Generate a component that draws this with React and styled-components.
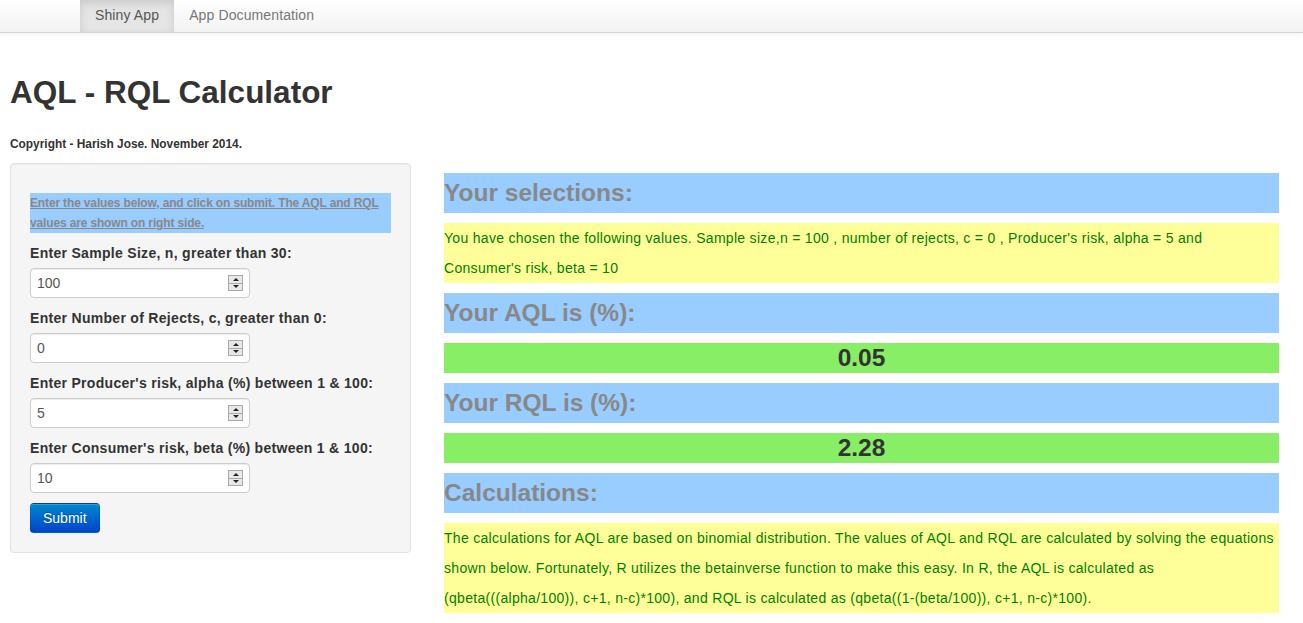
import React from "react";
import styled, { createGlobalStyle } from "styled-components";

const Global = createGlobalStyle`
  html, body { margin: 0; padding: 0; background: #fff; }
  body { font-family: "Liberation Sans", Arial, Helvetica, sans-serif; font-size: 14px; line-height: 20px; color: #333; }
  * { box-sizing: border-box; }
`;

const Navbar = styled.nav`
  height: 33px;
  background: linear-gradient(to bottom, #ffffff, #f2f2f2);
  border-bottom: 1px solid #d4d4d4;
  box-shadow: 0 1px 4px rgba(0,0,0,0.065);
  display: flex;
  padding-left: 80px;
`;

const NavTab = styled.a`
  display: flex;
  align-items: center;
  height: 32px;
  padding: 0 15px 2px;
  font-size: 14px;
  letter-spacing: 0.12px;
  color: ${p => (p.$active ? "#555" : "#777")};
  background: ${p => (p.$active ? "#e5e5e5" : "transparent")};
  box-shadow: ${p => (p.$active ? "inset 0 3px 8px rgba(0,0,0,0.125)" : "none")};
  text-decoration: none;
`;

const Page = styled.div`
  padding: 0 24px 0 10px;
`;

const Title = styled.h2`
  margin: 39px 0 0;
  font-size: 31.5px;
  line-height: 40px;
  font-weight: bold;
  color: #333;
`;

const Copyright = styled.h6`
  margin: 22px 0 0;
  font-size: 11.9px;
  line-height: 20px;
  font-weight: bold;
  color: #333;
`;

const Row = styled.div`
  display: grid;
  grid-template-columns: 401px 835px;
  column-gap: 33px;
  margin-top: 9px;
  align-items: start;
`;

const Well = styled.div`
  background: #f5f5f5;
  border: 1px solid #e3e3e3;
  border-radius: 4px;
  box-shadow: inset 0 1px 1px rgba(0,0,0,0.05);
  padding: 29px 19px 19px;
`;

const Note = styled.div`
  background: #99ccff;
  color: #888;
  font-size: 12px;
  font-weight: bold;
  line-height: 20px;
  letter-spacing: -0.15px;
  text-decoration: underline;
  margin-bottom: 10px;
`;

const Field = styled.div`
  margin-bottom: 5px;
`;

const Label = styled.label`
  display: block;
  font-size: 14px;
  font-weight: bold;
  line-height: 20px;
  letter-spacing: 0.3px;
  margin: 0 0 5px;
  color: #333;
`;

const InputBox = styled.div`
  width: 220px;
  height: 30px;
  background: #fff;
  border: 1px solid #ccc;
  border-radius: 4px;
  box-shadow: inset 0 1px 1px rgba(0,0,0,0.075);
  display: flex;
  align-items: center;
  justify-content: space-between;
  padding: 0 6px;
  margin-bottom: 10px;
`;

const Value = styled.span`
  font-size: 14px;
  color: #555;
`;

const Spinner = styled.div`
  width: 15px;
  height: 16px;
  display: flex;
  flex-direction: column;
  border: 1px solid #a9a9a9;
  background: #e8e8e8;
`;

const SpinHalf = styled.div`
  flex: 1;
  display: flex;
  align-items: center;
  justify-content: center;
  ${p => (p.$down ? "border-top: 1px solid #a9a9a9;" : "")}
  &::after {
    content: "";
    width: 0;
    height: 0;
    border-left: 3px solid transparent;
    border-right: 3px solid transparent;
    ${p => (p.$down ? "border-top: 3px solid #222;" : "border-bottom: 3px solid #222;")}
  }
`;

const SubmitButton = styled.button`
  font-family: inherit;
  font-size: 14px;
  line-height: 20px;
  color: #fff;
  padding: 4px 12px;
  height: 30px;
  border: 1px solid #0044cc;
  border-color: rgba(0,0,0,0.1) rgba(0,0,0,0.1) rgba(0,0,0,0.25);
  border-radius: 4px;
  background: linear-gradient(to bottom, #0088cc, #0044cc);
  text-shadow: 0 -1px 0 rgba(0,0,0,0.25);
  box-shadow: inset 0 1px 0 rgba(255,255,255,0.2), 0 1px 2px rgba(0,0,0,0.05);
  cursor: pointer;
`;

const Main = styled.div`
  display: flex;
  flex-direction: column;
  gap: 10px;
  padding-top: 10px;
`;

const Heading = styled.h3`
  margin: 0;
  background: #99ccff;
  color: #888;
  font-size: 24.5px;
  font-weight: bold;
  line-height: 40px;
  height: 40px;
`;

const Info = styled.div`
  background: #ffff99;
  color: #008000;
  font-size: 14px;
  line-height: 30px;
  letter-spacing: 0.3px;
`;

const Result = styled.div`
  background: #88ee66;
  color: #333;
  font-size: 24.5px;
  font-weight: bold;
  line-height: 30px;
  height: 30px;
  text-align: center;
`;

const fields = [
  { label: "Enter Sample Size, n, greater than 30:", value: "100" },
  { label: "Enter Number of Rejects, c, greater than 0:", value: "0" },
  { label: "Enter Producer's risk, alpha (%) between 1 & 100:", value: "5" },
  { label: "Enter Consumer's risk, beta (%) between 1 & 100:", value: "10" },
];

export default function App() {
  return (
    <>
      <Global />
      <Navbar>
        <NavTab $active href="#">Shiny App</NavTab>
        <NavTab href="#">App Documentation</NavTab>
      </Navbar>
      <Page>
        <Title>AQL - RQL Calculator</Title>
        <Copyright>Copyright - Harish Jose. November 2014.</Copyright>
        <Row>
          <Well>
            <Note>
              Enter the values below, and click on submit. The AQL and RQL values are shown on right side.
            </Note>
            {fields.map(f => (
              <Field key={f.label}>
                <Label>{f.label}</Label>
                <InputBox>
                  <Value>{f.value}</Value>
                  <Spinner>
                    <SpinHalf />
                    <SpinHalf $down />
                  </Spinner>
                </InputBox>
              </Field>
            ))}
            <SubmitButton>Submit</SubmitButton>
          </Well>
          <Main>
            <Heading>Your selections:</Heading>
            <Info>
              You have chosen the following values. Sample size,n = 100 , number of rejects, c = 0 , Producer's risk, alpha = 5 and Consumer's risk, beta = 10
            </Info>
            <Heading>Your AQL is (%):</Heading>
            <Result>0.05</Result>
            <Heading>Your RQL is (%):</Heading>
            <Result>2.28</Result>
            <Heading>Calculations:</Heading>
            <Info>
              The calculations for AQL are based on binomial distribution. The values of AQL and RQL are calculated by solving the equations shown below. Fortunately, R utilizes the betainverse function to make this easy. In R, the AQL is calculated as (qbeta(((alpha/100)), c+1, n-c)*100), and RQL is calculated as (qbeta((1-(beta/100)), c+1, n-c)*100).
            </Info>
          </Main>
        </Row>
      </Page>
    </>
  );
}
